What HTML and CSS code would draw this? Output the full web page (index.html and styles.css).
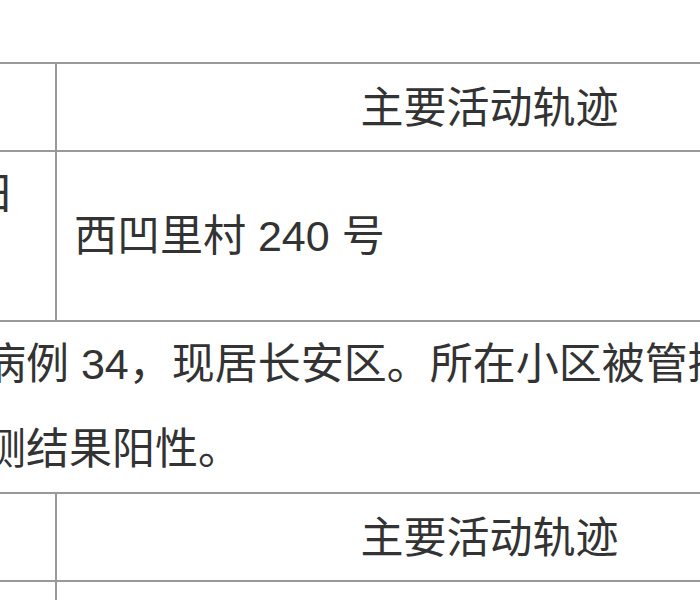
FILE: index.html
```html
<!DOCTYPE html>
<html lang="zh-CN">
<head>
<meta charset="utf-8">
<title>活动轨迹</title>
<link rel="stylesheet" href="styles.css">
</head>
<body>
<div class="page">
  <table class="track">
    <colgroup><col class="col-date"><col class="col-place"></colgroup>
    <tr class="head"><td class="date">时间</td><td class="title">主要活动轨迹</td></tr>
    <tr class="row"><td class="date">1月5日<br>至今</td><td class="place">西凹里村 240 号</td></tr>
  </table>
  <p class="case">病例 34，现居长安区。所在小区被管控，核酸检<br>测结果阳性。</p>
  <table class="track">
    <colgroup><col class="col-date"><col class="col-place"></colgroup>
    <tr class="head"><td class="date">时间</td><td class="title">主要活动轨迹</td></tr>
    <tr class="row"><td class="date">1月6日<br>至今</td><td class="place">长安区居家隔离</td></tr>
  </table>
</div>
</body>
</html>
```

FILE: styles.css
```css
html, body {
  margin: 0;
  padding: 0;
  background: #ffffff;
}

.page {
  width: 700px;
  height: 600px;
  overflow: hidden;
  padding-top: 62px;
  box-sizing: border-box;
  font-family: "Liberation Sans", "Noto Sans CJK SC", sans-serif;
  font-size: 43px;
  line-height: 85px;
  color: #333333;
}

.track {
  border-collapse: collapse;
  margin-left: -162px;
  table-layout: fixed;
  width: 1084px;
}

.col-date { width: 217px; }
.col-place { width: 867px; }

.track td {
  border: 2px solid #999999;
  padding: 0;
  vertical-align: middle;
}

.date { text-align: center; line-height: 84px; }
.head .date { line-height: 86px; }
.title { text-align: center; padding-top: 3px !important; line-height: 83px; }
.place { padding: 0 17px !important; text-align: left; }

.case {
  margin: 0 0 0 -17px;
  white-space: nowrap;
}
```
